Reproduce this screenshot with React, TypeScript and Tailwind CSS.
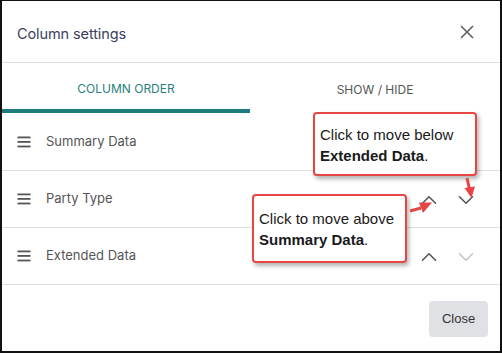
import { ChevronDown, ChevronUp, X } from "lucide-react";

const rows = [
  { label: "Summary Data", up: false, down: true, h: "h-[58px]" },
  { label: "Party Type", up: true, down: true, h: "h-[57px]" },
  { label: "Extended Data", up: true, down: false, h: "h-[57px]" },
];

function Hamburger() {
  return (
    <svg width="14" height="12" viewBox="0 0 14 12" className="text-[#555]">
      <rect x="0.5" y="0.5" width="13" height="1.8" fill="currentColor" />
      <rect x="0.5" y="5" width="13" height="1.8" fill="currentColor" />
      <rect x="0.5" y="9.6" width="13" height="1.8" fill="currentColor" />
    </svg>
  );
}

export default function App() {
  return (
    <div className="relative w-[502px] h-[353px] overflow-hidden bg-white border-l-2 border-t border-r-2 border-b-2 border-[#111] font-['Inter',sans-serif]">
      {/* Header */}
      <div className="h-[62px] pl-[15px] pr-[22px] flex items-center justify-between border-b border-[#dedede]">
        <h2 className="text-[14.5px] text-[#3b4060] tracking-[-0.1px] pt-[4px]">Column settings</h2>
        <X size={22} strokeWidth={1.9} className="text-[#666] mt-[1px]" />
      </div>

      {/* Tabs */}
      <div className="flex h-[50px]">
        <div className="w-[248px] flex items-center justify-center border-b-4 border-[#1f7b7b] text-[12px] text-[#2a8080] pt-[6px]">
          COLUMN ORDER
        </div>
        <div className="flex-1 flex items-center justify-center text-[12px] text-[#555] pt-[4px]">SHOW / HIDE</div>
      </div>

      {/* Rows */}
      <div>
        {rows.map((r) => (
          <div key={r.label} className={`${r.h} flex items-center border-b border-[#dedede] pl-[15px] pr-[21px]`}>
            <Hamburger />
            <span className="ml-[15px] text-[13px] text-[#555]">{r.label}</span>
            <div className="ml-auto flex items-center gap-[11px] pt-[1px]">
              <ChevronUp size={26} strokeWidth={1.4} className={r.up ? "text-[#555]" : "text-[#c4c4c4]"} />
              <ChevronDown size={26} strokeWidth={1.4} className={r.down ? "text-[#555]" : "text-[#c4c4c4]"} />
            </div>
          </div>
        ))}
      </div>

      {/* Footer */}
      <div className="flex justify-end pt-[16px] pr-[12px]">
        <button className="w-[59px] h-[36px] rounded-[4px] bg-[#dfe1e5] text-[13px] text-[#333] font-['Liberation_Sans',sans-serif]">
          Close
        </button>
      </div>

      {/* Callouts */}
      <div className="absolute left-[311px] top-[111px] w-[164px] h-[64px] bg-white border-2 border-[#e84545] rounded-[4px] shadow-[2px_3px_4px_rgba(0,0,0,0.3)] pl-[5px] pt-[10px] text-[15px] leading-[21px] text-[#1a1a1a] font-['Liberation_Sans',sans-serif]">
        <div>Click to move below</div>
        <div>
          <b>Extended Data</b>.
        </div>
      </div>
      <div className="absolute left-[250px] top-[193px] w-[155px] h-[69px] bg-white border-2 border-[#e84545] rounded-[4px] shadow-[2px_3px_4px_rgba(0,0,0,0.3)] pl-[5px] pt-[12px] text-[15px] leading-[21px] text-[#1a1a1a] font-['Liberation_Sans',sans-serif]">
        <div>Click to move above</div>
        <div>
          <b>Summary Data</b>.
        </div>
      </div>

      {/* Arrows */}
      <svg className="absolute left-0 top-0 pointer-events-none" width="502" height="353" viewBox="-2 -1 502 353">
        <line x1="463" y1="176" x2="465.5" y2="187" stroke="#e84545" strokeWidth="3" />
        <polygon points="460.5,186 471,184.5 467.5,196" fill="#e84545" />
        <line x1="406" y1="209" x2="417" y2="206" stroke="#e84545" strokeWidth="3" />
        <polygon points="415,200.5 419,211 428,200.5" fill="#e84545" />
      </svg>
    </div>
  );
}
